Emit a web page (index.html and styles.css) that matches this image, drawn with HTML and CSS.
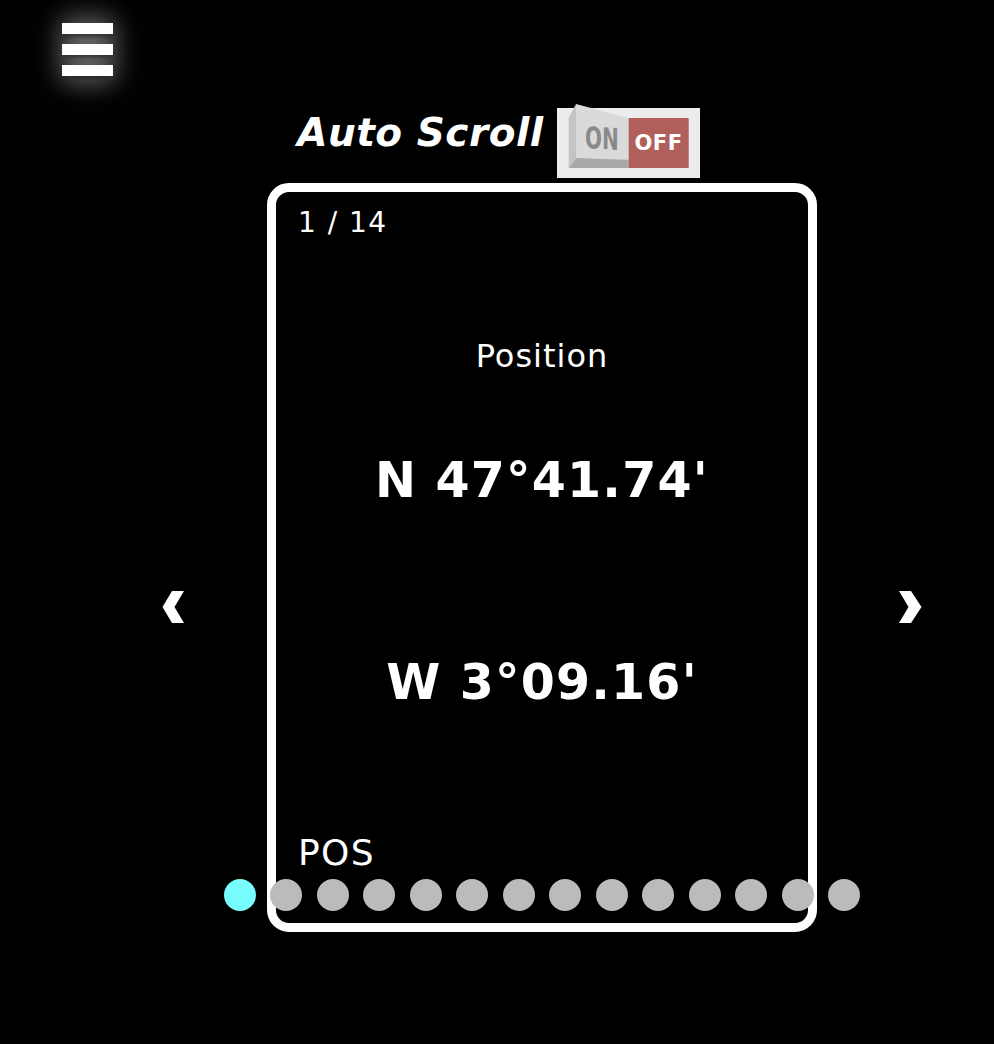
FILE: index.html
```html
<!DOCTYPE html>
<html lang="en">
<head>
<meta charset="utf-8">
<title>Position</title>
<link rel="stylesheet" href="styles.css">
</head>
<body>
<button class="menu-btn" aria-label="Menu">
  <span class="bar"></span>
  <span class="bar"></span>
  <span class="bar"></span>
</button>

<main class="page">
  <div class="title-row">
    <h1 class="title">Auto Scroll</h1>
    <svg class="toggle" width="146" height="78" viewBox="0 0 146 78" aria-label="Auto scroll off">
      <rect x="1" y="5" width="143" height="70" fill="#ececec"/>
      <polygon points="12.7,15 20,1 20,55 12.7,65" fill="#c4c4c4"/>
      <polygon points="20,1 72.7,15 72.7,56.7 20,55" fill="#dadada"/>
      <polygon points="12.7,65 20,55 72.7,56.7 72.7,65" fill="#a9a9a9"/>
      <rect x="72.7" y="15" width="60" height="50" fill="#b15f5a"/>
      <text transform="translate(29 45) matrix(1 0.06 0 1.5 0 0)" class="on-label">ON</text>
      <text x="78.5" y="47" class="off-label">OFF</text>
    </svg>
  </div>

  <div class="carousel-wrap">
    <div class="carousel">
      <button class="nav nav-prev" aria-label="Previous">
        <svg width="24" height="34" viewBox="0 0 24 34"><polygon points="10,1 22,1 12.5,17 22,33 10,33 0.5,17" fill="#fff"/></svg>
      </button>

      <section class="card">
        <div class="count">1 / 14</div>
        <div class="label">Position</div>
        <div class="value value-lat">N 47°41.74'</div>
        <div class="value value-lon">W 3°09.16'</div>
        <div class="code">POS</div>
        <div class="dots">
          <span class="dot active"></span>
          <span class="dot"></span>
          <span class="dot"></span>
          <span class="dot"></span>
          <span class="dot"></span>
          <span class="dot"></span>
          <span class="dot"></span>
          <span class="dot"></span>
          <span class="dot"></span>
          <span class="dot"></span>
          <span class="dot"></span>
          <span class="dot"></span>
          <span class="dot"></span>
          <span class="dot"></span>
        </div>
      </section>

      <button class="nav nav-next" aria-label="Next">
        <svg width="24" height="34" viewBox="0 0 24 34"><polygon points="1,1 13,1 23.5,17 13,33 1,33 10.5,17" fill="#fff"/></svg>
      </button>
    </div>
  </div>
</main>
</body>
</html>
```

FILE: styles.css
```css
html, body {
  margin: 0;
  padding: 0;
  background: #000;
  color: #fff;
  font-family: "DejaVu Sans", Verdana, sans-serif;
}

.menu-btn {
  position: absolute;
  left: 62px;
  top: 23px;
  width: 51px;
  padding: 0;
  margin: 0;
  border: 0;
  background: transparent;
  display: flex;
  flex-direction: column;
  gap: 10px;
  cursor: pointer;
  filter: drop-shadow(0 0 14px rgba(255, 255, 255, 0.35));
}

.bar {
  display: block;
  width: 51px;
  height: 11px;
  background: #fff;
  box-shadow: 2px 3px 3px #2a2a2a, 0 0 28px rgba(255, 255, 255, 0.4);
}

.page {
  display: flex;
  flex-direction: column;
}

.title-row {
  margin-top: 103px;
  padding-left: 5px;
  display: flex;
  justify-content: center;
  align-items: flex-start;
  gap: 12px;
}

.title {
  margin: 7px 0 0;
  font-size: 39px;
  font-weight: bold;
  font-style: italic;
  letter-spacing: 0.5px;
  line-height: normal;
}

.toggle {
  display: block;
}

.on-label {
  font-family: "DejaVu Sans", sans-serif;
  font-weight: bold;
  font-size: 20px;
  fill: #8a8a8a;
}

.off-label {
  font-family: "DejaVu Sans", sans-serif;
  font-weight: bold;
  font-size: 21px;
  letter-spacing: 0.5px;
  fill: #fff;
}

.carousel-wrap {
  padding-left: 90px;
  display: flex;
  justify-content: center;
  margin-top: 2px;
}

.carousel {
  display: flex;
  align-items: flex-start;
  gap: 81px;
}

.nav {
  margin-top: 407px;
  padding: 0;
  border: 0;
  background: transparent;
  cursor: pointer;
  line-height: 0;
}

.card {
  position: relative;
  box-sizing: border-box;
  width: 550px;
  height: 749px;
  border: 9px solid #fff;
  border-radius: 22px;
  display: flex;
  flex-direction: column;
  padding: 14px 22px 0;
}

.count {
  font-size: 28px;
  line-height: 33px;
  letter-spacing: 1.5px;
}

.label {
  margin-top: 99px;
  font-size: 32px;
  line-height: 37px;
  letter-spacing: 1px;
  text-align: center;
}

.value {
  font-size: 49px;
  font-weight: bold;
  line-height: 57px;
  letter-spacing: 1.2px;
  text-align: center;
}

.value-lat {
  margin-top: 77px;
}

.value-lon {
  margin-top: 145px;
}

.code {
  margin-top: 121px;
  font-size: 36px;
  line-height: 42px;
  letter-spacing: 1.3px;
}

.dots {
  position: absolute;
  left: 0;
  right: 0;
  bottom: 12px;
  display: flex;
  justify-content: center;
  gap: 14.5px;
}

.dot {
  flex: none;
  width: 32px;
  height: 32px;
  border-radius: 50%;
  background: #bbbbbb;
}

.dot.active {
  background: #77fcff;
}
```
